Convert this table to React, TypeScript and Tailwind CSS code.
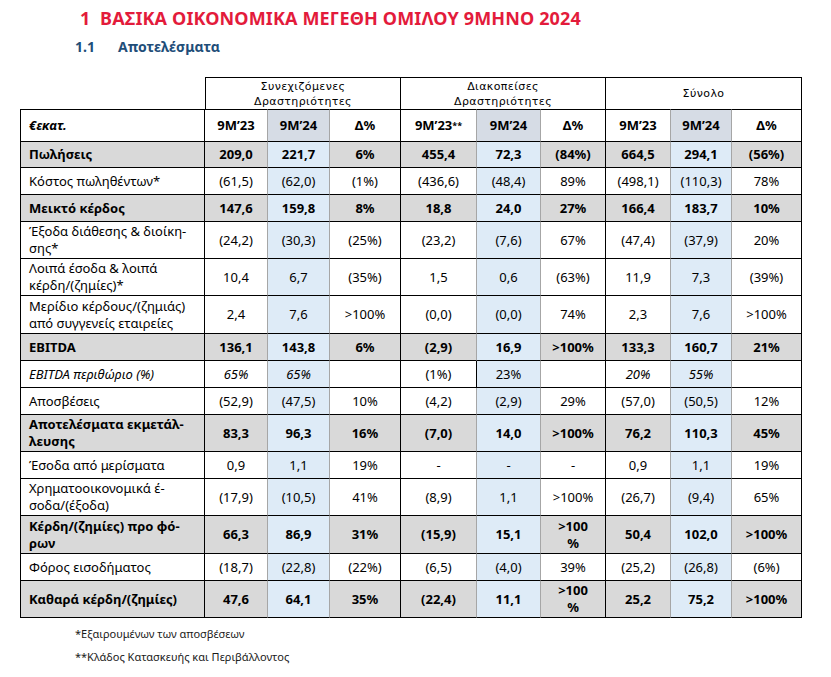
type Row = {
  label: string[];
  v: string[];
  h: number;
  bold?: boolean;
  italic?: boolean;
  italicCols?: number[];
};

const rows: Row[] = [
  { label: ["Πωλήσεις"], bold: true, h: 26, v: ["209,0", "221,7", "6%", "455,4", "72,3", "(84%)", "664,5", "294,1", "(56%)"] },
  { label: ["Κόστος πωληθέντων*"], h: 27, v: ["(61,5)", "(62,0)", "(1%)", "(436,6)", "(48,4)", "89%", "(498,1)", "(110,3)", "78%"] },
  { label: ["Μεικτό κέρδος"], bold: true, h: 27, v: ["147,6", "159,8", "8%", "18,8", "24,0", "27%", "166,4", "183,7", "10%"] },
  { label: ["Έξοδα διάθεσης & διοίκη-", "σης*"], h: 37, v: ["(24,2)", "(30,3)", "(25%)", "(23,2)", "(7,6)", "67%", "(47,4)", "(37,9)", "20%"] },
  { label: ["Λοιπά έσοδα & λοιπά", "κέρδη/(ζημίες)*"], h: 37, v: ["10,4", "6,7", "(35%)", "1,5", "0,6", "(63%)", "11,9", "7,3", "(39%)"] },
  { label: ["Μερίδιο κέρδους/(ζημιάς)", "από συγγενείς εταιρείες"], h: 38, v: ["2,4", "7,6", ">100%", "(0,0)", "(0,0)", "74%", "2,3", "7,6", ">100%"] },
  { label: ["EBITDA"], bold: true, h: 27, v: ["136,1", "143,8", "6%", "(2,9)", "16,9", ">100%", "133,3", "160,7", "21%"] },
  { label: ["EBITDA περιθώριο (%)"], italic: true, italicCols: [0, 1, 6, 7], h: 27, v: ["65%", "65%", "", "(1%)", "23%", "", "20%", "55%", ""] },
  { label: ["Αποσβέσεις"], h: 27, v: ["(52,9)", "(47,5)", "10%", "(4,2)", "(2,9)", "29%", "(57,0)", "(50,5)", "12%"] },
  { label: ["Αποτελέσματα εκμετάλ-", "λευσης"], bold: true, h: 37, v: ["83,3", "96,3", "16%", "(7,0)", "14,0", ">100%", "76,2", "110,3", "45%"] },
  { label: ["Έσοδα από μερίσματα"], h: 27, v: ["0,9", "1,1", "19%", "-", "-", "-", "0,9", "1,1", "19%"] },
  { label: ["Χρηματοοικονομικά έ-", "σοδα/(έξοδα)"], h: 37, v: ["(17,9)", "(10,5)", "41%", "(8,9)", "1,1", ">100%", "(26,7)", "(9,4)", "65%"] },
  { label: ["Κέρδη/(ζημίες) προ φό-", "ρων"], bold: true, h: 38, v: ["66,3", "86,9", "31%", "(15,9)", "15,1", ">100|%", "50,4", "102,0", ">100%"] },
  { label: ["Φόρος εισοδήματος"], h: 27, v: ["(18,7)", "(22,8)", "(22%)", "(6,5)", "(4,0)", "39%", "(25,2)", "(26,8)", "(6%)"] },
  { label: ["Καθαρά κέρδη/(ζημίες)"], bold: true, h: 37, v: ["47,6", "64,1", "35%", "(22,4)", "11,1", ">100|%", "25,2", "75,2", ">100%"] },
];

const colWidths = [185, 63, 62, 71, 76, 64, 65, 65, 61, 70];

// right border of each value column: grey inside a group, black at group edges
const rightBorder = (i: number) =>
  i % 3 === 2 ? "border-r-black" : "border-r-[#a6a6a6] border-r-[1.5px]";

const font = { fontFamily: '"Noto Sans", "Open Sans", sans-serif' };

function Value({ text }: { text: string }) {
  if (text.includes("|")) {
    const [a, b] = text.split("|");
    return (
      <span className="block leading-[17px]">
        {a}
        <br />
        {b}
      </span>
    );
  }
  return <>{text}</>;
}

export default function App() {
  return (
    <div className="w-[831px] h-[677px] bg-white text-black" style={font}>
      <h1 className="pl-[80px] pt-[6px] text-[18px] font-bold text-[#e31b3b] leading-[24px] tracking-[0.15px]">
        1&nbsp;&nbsp;ΒΑΣΙΚΑ ΟΙΚΟΝΟΜΙΚΑ ΜΕΓΕΘΗ ΟΜΙΛΟΥ 9ΜΗΝΟ 2024
      </h1>
      <h2 className="mt-[7px] flex pl-[75px] text-[14px] font-bold text-[#1f4e79] leading-[20px]">
        <span className="w-[43px]">1.1</span>
        <span>Αποτελέσματα</span>
      </h2>

      <table className="ml-[20px] mt-[20px] border-separate border-spacing-0 table-fixed text-[13px] leading-[17px]" style={{ width: 782 }}>
        <colgroup>
          {colWidths.map((w, i) => (
            <col key={i} style={{ width: w }} />
          ))}
        </colgroup>
        <thead>
          <tr>
            <td className="h-[32px]" />
            {[
              ["Συνεχιζόμενες", "Δραστηριότητες"],
              ["Διακοπείσες", "Δραστηριότητες"],
              ["Σύνολο"],
            ].map((g, gi) => (
              <td
                key={gi}
                colSpan={3}
                className={`h-[32px] border-t border-r border-black text-center align-middle text-[11px] leading-[15px] tracking-[0.4px] ${gi === 0 ? "border-l" : ""}`}
                style={{ fontFamily: '"DejaVu Sans", Verdana, sans-serif' }}
              >
                {g.map((l, li) => (
                  <div key={li}>{l}</div>
                ))}
              </td>
            ))}
          </tr>
          <tr className="font-bold">
            <td className="h-[33px] border-l border-t border-b border-r border-black pl-[8px] italic">€εκατ.</td>
            {["9M’23", "9M’24", "Δ%", "9M’23**", "9M’24", "Δ%", "9M’23", "9M’24", "Δ%"].map((h, i) => (
              <td
                key={i}
                className={`h-[33px] border-t border-b border-r border-t-black border-b-black text-center ${rightBorder(i)} ${i % 3 === 1 ? "bg-[#d6dce5]" : ""}`}
              >
                {h.endsWith("**") ? (
                  <>
                    {h.slice(0, -2)}
                    <span className="text-[9px] align-top">**</span>
                  </>
                ) : (
                  h
                )}
              </td>
            ))}
          </tr>
        </thead>
        <tbody>
          {rows.map((r, ri) => (
            <tr key={ri} className={r.bold ? "font-bold" : ""}>
              <td
                className={`border-l border-b border-r border-black pl-[8px] pr-[4px] align-middle ${r.bold ? "bg-[#d9d9d9]" : ""} ${r.italic ? "italic" : ""}`}
                style={{ height: r.h }}
              >
                {r.label.map((l, li) => (
                  <div key={li}>{l}</div>
                ))}
              </td>
              {r.v.map((v, i) => {
                const blue = i % 3 === 1;
                const bg = blue ? "bg-[#deebf7]" : r.bold ? "bg-[#d9d9d9]" : "";
                const special = r.italic && i === 3 ? "border-r-black border-r" : rightBorder(i);
                return (
                  <td
                    key={i}
                    className={`border-b border-r border-b-black text-center align-middle ${special} ${bg} ${r.italicCols?.includes(i) ? "italic" : ""}`}
                    style={{ height: r.h }}
                  >
                    <Value text={v} />
                  </td>
                );
              })}
            </tr>
          ))}
        </tbody>
      </table>

      <div className="pl-[75px] pt-[4px] text-[11px] leading-[23px] text-[#1a1a1a]">
        <p>*Εξαιρουμένων των αποσβέσεων</p>
        <p>**Κλάδος Κατασκευής και Περιβάλλοντος</p>
      </div>
    </div>
  );
}
